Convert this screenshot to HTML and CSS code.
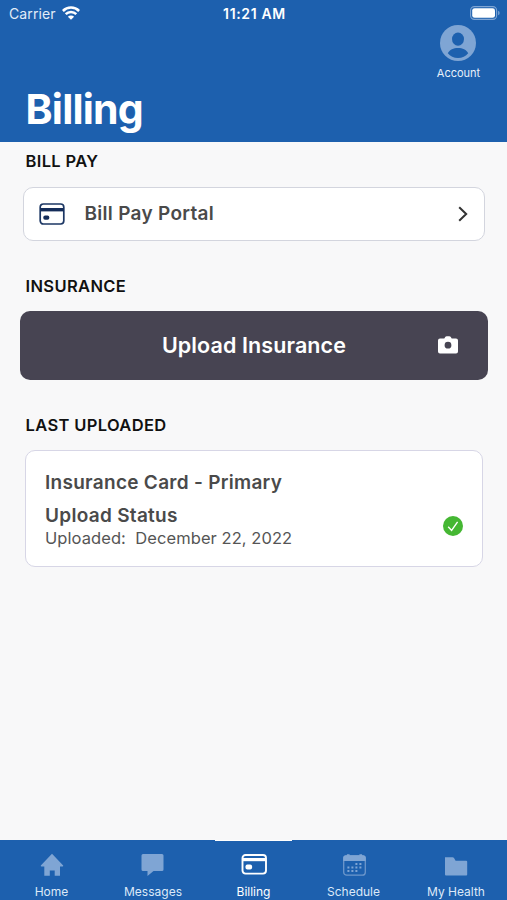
FILE: index.html
```html
<!DOCTYPE html>
<html lang="en">
<head>
<meta charset="utf-8">
<title>Billing</title>
<link rel="stylesheet" href="styles.css">
</head>
<body>
<div class="app">
  <header class="header">
    <div class="status">
      <div class="carrier"><span>Carrier</span>
        <svg width="18" height="14" viewBox="0 0 18 14" fill="none" stroke="#fff" stroke-width="2.5"><path d="M.9 5a11.400 11.400 0 0 1 16.200 0M3.700 8.200a7.500 7.500 0 0 1 10.600 0"/><path d="M9 13.800 5.900 10.800a4.400 4.400 0 0 1 6.200 0z" fill="#fff" stroke="none"/></svg>
      </div>
      <div class="time">11:21 AM</div>
      <svg class="battery" width="30" height="14" viewBox="0 0 30 14"><rect x=".6" y=".6" width="26" height="12.8" rx="3.8" fill="none" stroke="#7fa5d4" stroke-width="1.1"/><rect x="2.2" y="2.2" width="22.8" height="9.6" rx="2.4" fill="#fff"/><path d="M28.1 4.8q1.5.5 1.5 2.2t-1.5 2.2z" fill="#7fa5d4"/></svg>
    </div>
    <div class="headrow">
      <h1>Billing</h1>
      <div class="account">
        <svg width="36" height="36" viewBox="0 0 36 36"><circle cx="18" cy="18" r="18" fill="#7fa5d4"/><ellipse cx="18" cy="14.1" rx="6" ry="6.6" fill="#1d60ae"/><path d="M7.8 28.3C9.5 24.7 13.5 23 18 23s8.500 1.700 10.200 5.300C25.800 31.400 22.200 33 18 33S10.200 31.400 7.800 28.300z" fill="#1d60ae"/></svg>
        <span>Account</span>
      </div>
    </div>
  </header>
  <main class="main">
    <h2 class="t-pay">BILL PAY</h2>
    <section class="portal">
      <svg width="26" height="22" viewBox="0 0 26 22"><rect x="1.200" y="1" width="23.600" height="20" rx="3.2" fill="none" stroke="#1c3764" stroke-width="1.7"/><path d="M1.200 5h23.600v3.400H1.200z" fill="#142c59"/><rect x="4.300" y="12.400" width="6" height="4.400" rx="1.800" fill="#142c59"/></svg>
      <span class="strong portal-label">Bill Pay Portal</span>
      <svg width="10" height="16" viewBox="0 0 10 16" fill="none" stroke="#333" stroke-width="2"><path d="m1.200 1.200 7 6.800-7 6.800"/></svg>
    </section>
    <h2 class="t-ins">INSURANCE</h2>
    <button class="upload"><span>Upload Insurance</span>
      <svg width="20" height="18" viewBox="0 0 20 18"><path fill="#fff" fill-rule="evenodd" d="M2 2.600h4.300L7.400.8Q7.900.2 8.700.2h2.600q.8 0 1.300.6l1.100 1.800H18q2 0 2 2v10.800q0 2-2 2H2q-2 0-2-2V4.600q0-2 2-2zM10 5.800a3.400 3.400 0 1 0 0 6.800 3.400 3.400 0 0 0 0-6.800z"/></svg>
    </button>
    <h2 class="t-last">LAST UPLOADED</h2>
    <section class="record">
      <div class="strong">Insurance Card - Primary</div>
      <div class="row">
        <div>
          <div class="strong">Upload Status</div>
          <div class="date">Uploaded:&nbsp; December 22, 2022</div>
        </div>
        <svg width="20" height="20" viewBox="0 0 20 20"><circle cx="10" cy="10" r="10" fill="#45b733"/><path d="m5.200 10.800 3.400 3.600 6-8.600" fill="none" stroke="#fff" stroke-width="1.400"/></svg>
      </div>
    </section>
  </main>
  <nav class="tabs">
    <div class="tab"><svg width="24" height="24" viewBox="0 0 24 24" fill="#7fa5d4"><path d="M12 .8 23.200 12.500q.3.900-.8.900H20v9.400h-5.300v-5.300H9.800v5.300H4.300v-9.400H1.600q-1.100 0-.8-.9z"/></svg><span>Home</span></div>
    <div class="tab"><svg width="24" height="24" viewBox="0 0 24 24" fill="#7fa5d4"><path d="M2 1h19q1.500 0 1.500 1.500v14q0 1.500-1.500 1.500H12.500l-6 4.900V18H2Q.5 18 .5 16.500v-14Q.5 1 2 1z"/></svg><span>Messages</span></div>
    <div class="tab active"><svg width="26" height="24" viewBox="0 0 26 24"><rect x="1.500" y="2" width="23.500" height="18.600" rx="3" fill="none" stroke="#fff" stroke-width="1.900"/><path d="M1.500 5h23.500v3.200H1.500z" fill="#fff"/><rect x="4.500" y="11.600" width="6.600" height="4.800" rx="1.900" fill="#fff"/></svg><span>Billing</span></div>
    <div class="tab"><svg width="24" height="24" viewBox="0 0 24 24" fill="#7fa5d4"><rect x="1.700" y="3" width="21.600" height="19.200" rx="3" fill="none" stroke="#6d97cb" stroke-width="1.300"/><path d="M1.200 8V5q0-2.700 2.700-2.700h1V1.200h2.700v1.100h9.800V1.200h2.700v1.100h1q2.700 0 2.700 2.700v3zM13.400 10h2v2h-2zM17.400 10h2v2h-2zM9.400 13.500h2v2h-2zM5.400 13.500h2v2h-2zM13.400 13.500h2v2h-2zM17.400 13.500h2v2h-2zM5.400 17h2v2h-2zM9.400 17h2v2h-2zM13.400 17h2v2h-2z"/></svg><span>Schedule</span></div>
    <div class="tab last"><svg width="24" height="24" viewBox="0 0 24 24" fill="#7fa5d4"><path d="M1 4.200h7.500q1 0 1.500.9l1.600 2.700h10.600q1 0 1 1V21.500q0 1-1 1H2q-1 0-1-1z"/></svg><span>My Health</span></div>
  </nav>
</div>
</body>
</html>
```
FILE: styles.css
```css
* { box-sizing: border-box; }
body { margin: 0; font-family: Inter, "Liberation Sans", sans-serif; background: #f8f8f9; }
svg { display: block; flex: none; }
.app { width: 507px; height: 900px; display: flex; flex-direction: column; }
.header { height: 142px; background: #1d60ae; color: #fff; flex: none; }
.status { height: 25px; padding: 1px 7px 0 9px; display: grid; grid-template-columns: 1fr auto 1fr; align-items: center; font-size: 14px; }
.carrier { display: flex; align-items: center; gap: 6px; color: #e2ecf8; letter-spacing: 0.1px; }
.time { font-weight: 600; letter-spacing: 0.65px; }
.battery { justify-self: end; }
.headrow { display: flex; justify-content: space-between; padding: 0 20px 0 25.500px; }
h1 { margin: 59px 0 0; font-size: 41px; line-height: 50px; font-weight: 700; letter-spacing: -0.8px; }
.account { width: 58px; display: flex; flex-direction: column; align-items: center; font-size: 11px; line-height: 14px; gap: 5px; color: #e8f0fa; }
.account span { margin-left: 1px; }
.main { flex: 1; display: flex; flex-direction: column; }
h2 { margin: 0 0 0 25.500px; font-size: 16.500px; line-height: 20px; font-weight: 600; letter-spacing: 0.36px; color: #111; }
.t-pay { margin-top: 9px; }
.portal { height: 54px; margin: 16px 22px 0 23px; padding: 0 16px 0 15px; background: #fff; border: 1.500px solid #d3d5de; border-radius: 10px; display: flex; align-items: center; }
.strong { font-size: 19px; line-height: 24px; font-weight: 600; letter-spacing: 0.29px; color: #4a4a4a; }
.portal-label { flex: 1; margin-left: 19.500px; }
.t-ins { margin-top: 35px; }
.upload { height: 69px; margin: 15px 19px 0 20px; padding: 0 29px 1px; border: 0; border-radius: 10px; background: #474452; color: #fff; font: 600 21.500px/28px Inter, sans-serif; letter-spacing: 0.1px; display: grid; grid-template-columns: 20px 1fr 20px; align-items: center; }
.upload span { grid-column: 2; text-align: center; }
.upload svg { margin-left: -1px; }
.t-last { margin-top: 35px; }
.record { height: 117px; margin: 15px 24px 0 25px; padding: 20px 19px 0 19px; background: #fff; border: 1.500px solid #d7d6e6; border-radius: 10px; }
.row { display: flex; justify-content: space-between; align-items: center; margin-top: 9px; }
.date { font-size: 16.500px; line-height: 20px; letter-spacing: 0.07px; color: #555; white-space: nowrap; }
.tabs { height: 60px; background: #1d60ae; display: grid; grid-template-columns: 103px 100px 101px 99px 104px; flex: none; }
.tab { display: flex; flex-direction: column; align-items: center; padding-top: 13px; gap: 7px; font-size: 12px; line-height: 16px; color: #dce9f8; }
.last { padding-left: 2px; }
.active { color: #fff; position: relative; }
.active::before { content: ""; position: absolute; top: 0; left: 12px; width: 77px; height: 1px; background: #fff; }
```
